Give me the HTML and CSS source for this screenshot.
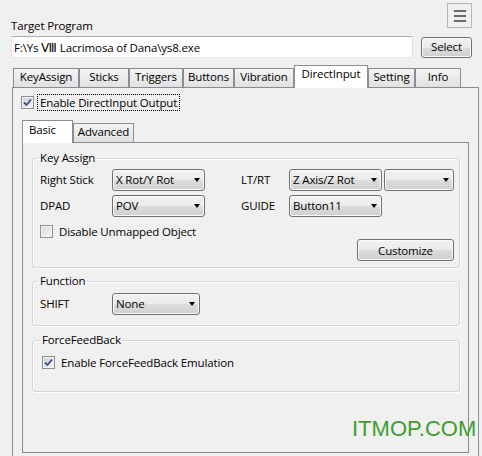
FILE: index.html
```html
<!DOCTYPE html>
<html lang="en">
<head>
    <meta charset="UTF-8">
    <title>DirectInput Settings</title>
    <link rel="stylesheet" href="styles.css">
</head>
<body>
    <div class="header">
        <span class="caption">Target Program</span>
        <button class="menu-btn"><span></span><span></span><span></span></button>
    </div>

    <div class="path-row">
        <input class="path-input" type="text" value="F:\Ys Ⅷ Lacrimosa of Dana\ys8.exe">
        <button class="btn select-btn">Select</button>
    </div>

    <div class="tabs">
        <div class="tab w-key">KeyAssign</div>
        <div class="tab w-sticks">Sticks</div>
        <div class="tab w-trig">Triggers</div>
        <div class="tab w-btn">Buttons</div>
        <div class="tab w-vib">Vibration</div>
        <div class="tab active w-di">DirectInput</div>
        <div class="tab w-set">Setting</div>
        <div class="tab w-info">Info</div>
    </div>

    <div class="tab-page">
        <div class="check-row">
            <span class="box checked"><svg width="9" height="9" viewBox="0 0 9 9"><path d="M1 4.5 L3.5 7 L8 1.5" fill="none" stroke="#3f4f7f" stroke-width="1.8"/></svg></span>
            <span class="focus">Enable DirectInput Output</span>
        </div>

        <div class="tabs sub-tabs">
            <div class="tab active w-basic">Basic</div>
            <div class="tab w-adv">Advanced</div>
        </div>

        <div class="sub-page">
            <fieldset class="group key-group">
                <legend>Key Assign</legend>
                <div class="key-grid">
                    <span class="lbl">Right Stick</span>
                    <div class="combo w93">X Rot/Y Rot</div>
                    <span class="lbl">LT/RT</span>
                    <div class="combo-pair">
                        <div class="combo w93">Z Axis/Z Rot</div>
                        <div class="combo w70"></div>
                    </div>
                    <span class="lbl">DPAD</span>
                    <div class="combo w93">POV</div>
                    <span class="lbl">GUIDE</span>
                    <div class="combo w93">Button11</div>
                </div>
                <div class="key-bottom">
                    <div class="check-line">
                        <span class="box"></span>
                        <span>Disable Unmapped Object</span>
                    </div>
                    <button class="btn customize-btn">Customize</button>
                </div>
            </fieldset>

            <fieldset class="group func-group">
                <legend>Function</legend>
                <div class="key-grid">
                    <span class="lbl">SHIFT</span>
                    <div class="combo w88">None</div>
                </div>
            </fieldset>

            <fieldset class="group ff-group">
                <legend>ForceFeedBack</legend>
                <div class="check-line">
                    <span class="box checked"><svg width="9" height="9" viewBox="0 0 9 9"><path d="M1 4.5 L3.5 7 L8 1.5" fill="none" stroke="#3f4f7f" stroke-width="1.8"/></svg></span>
                    <span>Enable ForceFeedBack Emulation</span>
                </div>
            </fieldset>
        </div>
    </div>

    <div class="watermark">ITMOP.COM</div>
</body>
</html>
```

FILE: styles.css
```css
* {
    box-sizing: border-box;
}
body {
    margin: 0;
    width: 482px;
    height: 456px;
    overflow: hidden;
    position: relative;
    background: #f0f0f0;
    font-family: "Open Sans", sans-serif;
    font-size: 11.5px;
    letter-spacing: -0.15px;
    color: #000;
}
.header {
    display: flex;
    justify-content: space-between;
    align-items: flex-start;
    padding: 3px 10px 0 11px;
}
.caption {
    margin-top: 15px;
    line-height: 16px;
}
.menu-btn {
    width: 25px;
    height: 25px;
    padding: 0;
    border: 1px solid #b4b4b4;
    background: #f0f0f0;
    display: flex;
    flex-direction: column;
    align-items: center;
    justify-content: center;
    gap: 3px;
}
.menu-btn span {
    width: 12px;
    height: 2px;
    background: #6a6a6a;
}
.path-row {
    display: flex;
    align-items: center;
    gap: 8px;
    margin-top: 2px;
    padding: 0 10px 0 11px;
}
.path-input {
    width: 402px;
    height: 22px;
    padding: 0 2px;
    border: 1px solid #abadb3;
    border-color: #abadb3 #dbdfe6 #e3e9ef #e2e3ea;
    background: #fff;
    font: inherit;
    letter-spacing: inherit;
    color: #000;
    outline: none;
}
.btn {
    font: inherit;
    letter-spacing: inherit;
    color: #000;
    padding: 0;
    border: 1px solid #707070;
    border-radius: 3px;
    background: linear-gradient(#f2f2f2 0%, #ebebeb 50%, #dddddd 51%, #cfcfcf 100%);
    box-shadow: inset 0 0 0 1px #fbfbfb;
}
.select-btn {
    width: 51px;
    height: 21px;
    line-height: 18px;
}
.tabs {
    display: flex;
    align-items: flex-end;
    height: 23px;
    margin-top: 7px;
    margin-bottom: -1px;
    padding-left: 13px;
    position: relative;
    z-index: 1;
}
.tab {
    height: 19px;
    margin-bottom: 1px;
    border: 1px solid #8c8e94;
    border-bottom: none;
    background: linear-gradient(#f4f4f4, #e1e1e1);
    line-height: 16px;
    text-align: center;
    white-space: nowrap;
}
.tab.active {
    height: 23px;
    margin-bottom: 0;
    background: #fff;
}
.w-key { width: 66px; }
.w-sticks { width: 50px; }
.w-trig { width: 54px; }
.w-btn { width: 51px; }
.w-vib { width: 60px; }
.w-di { width: 74px; }
.w-set { width: 47px; }
.w-info { width: 46px; }
.tab-page {
    margin: 0 3px 0 12px;
    height: 369px;
    padding: 6px 0 0 8px;
    border: 1px solid #898c95;
    border-bottom: none;
    background: #f0f0f0;
}
.check-row {
    display: flex;
    align-items: center;
    gap: 3px;
}
.focus {
    border: 1px dotted #000;
    padding: 1px 2px 0;
    line-height: 14px;
}
.box {
    width: 13px;
    height: 13px;
    flex: none;
    border: 1px solid #8e8f8f;
    background: linear-gradient(135deg, #d8d8d8, #f7f7f7);
    box-shadow: inset 0 0 0 1px #f4f4f4;
    display: flex;
    align-items: center;
    justify-content: center;
}
.box.checked {
    background: linear-gradient(135deg, #c6cfe0, #f4f6fb);
}
.sub-tabs {
    margin-top: 9px;
    padding-left: 1px;
}
.w-basic {
    width: 51px;
    text-align: left;
    padding: 1px 0 0 6px;
}
.w-adv { width: 61px; }
.sub-page {
    margin-left: 1px;
    width: 447px;
    height: 311px;
    padding: 7px 8px 0 9px;
    border: 1px solid #898c95;
    background: #f0f0f0;
}
.group {
    margin: 0;
    min-inline-size: 0;
    border: 1px solid #d5d5d5;
    border-radius: 3px;
    box-shadow: inset 1px 1px 0 #fff, 1px 1px 0 #fff;
}
.group legend {
    margin-left: -2px;
    padding: 0 2px;
    line-height: 16px;
}
.key-group {
    padding: 3px 5px 6px 7px;
}
.func-group {
    margin-top: 5px;
    padding: 4px 5px 10px 7px;
}
.ff-group {
    margin-top: 6px;
    padding: 7px 5px 21px 9px;
}
.key-grid {
    display: grid;
    grid-template-columns: 72px 129px 48px auto;
    grid-auto-rows: 22px;
    row-gap: 4px;
}
.lbl {
    line-height: 22px;
}
.combo {
    position: relative;
    height: 22px;
    border: 1px solid #707070;
    border-radius: 3px;
    background: linear-gradient(#f2f2f2 0%, #ebebeb 50%, #dddddd 51%, #cfcfcf 100%);
    box-shadow: inset 0 0 0 1px #fbfbfb;
    line-height: 20px;
    padding-left: 3px;
    white-space: nowrap;
}
.combo::after {
    content: "";
    position: absolute;
    right: 4px;
    top: 8px;
    border-top: 4px solid #000;
    border-left: 3px solid transparent;
    border-right: 3px solid transparent;
}
.w93 { width: 93px; }
.w88 { width: 88px; }
.w70 { width: 70px; }
.combo-pair {
    display: flex;
    gap: 2px;
}
.key-bottom {
    display: flex;
    justify-content: space-between;
    align-items: flex-start;
    margin-top: 7px;
}
.check-line {
    display: flex;
    align-items: center;
    gap: 6px;
    line-height: 15px;
}
.customize-btn {
    width: 97px;
    height: 22px;
    margin-top: 15px;
    line-height: 19px;
}
.watermark {
    position: absolute;
    left: 352px;
    top: 418px;
    font-family: "Liberation Sans", Arial, sans-serif;
    font-size: 22px;
    letter-spacing: 0;
    line-height: 22px;
    color: #3c9f2d;
}
```
